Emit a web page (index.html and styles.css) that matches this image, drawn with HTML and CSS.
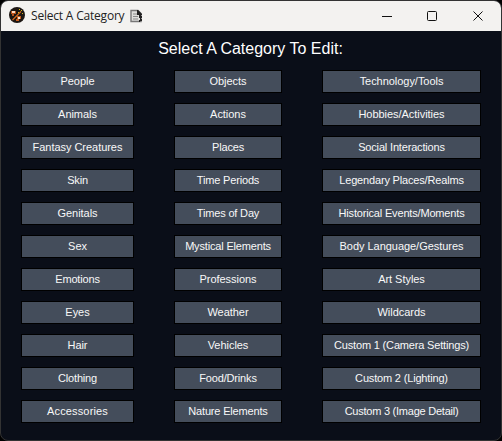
FILE: index.html
```html
<!DOCTYPE html>
<html lang="en">
<head>
<meta charset="utf-8">
<title>Select A Category</title>
<link rel="stylesheet" href="styles.css">
</head>
<body>
<div class="window">
  <header class="titlebar">
    <svg class="app-icon" width="18" height="18" viewBox="0 0 18 18">
      <circle cx="9" cy="9" r="8" fill="#1c1612"/>
      <path d="M4.500 14L13 5.500" stroke="#d96a20" stroke-width="1.100"/>
      <path d="M3 5h5v3H6v2H4V8H3z" fill="#b8521c"/>
      <path d="M4 5h3v2H4z" fill="#ffd9bd"/>
      <path d="M9 10h4v3h-2v2H8v-2h1z" fill="#c85c1c"/>
      <path d="M10 11h2v2h-2z" fill="#ffe3cc"/>
      <path d="M11 3h1v1h-1zM13 4h1v1h-1zM10 6h1v1h-1zM14 7h1v1h-1z" fill="#d8b818"/>
    </svg>
    <span class="caption">Select A Category</span>
    <svg class="doc-icon" width="13" height="14" viewBox="0 0 13 14">
      <path d="M1 1.500h7l3 3v8H1z" fill="#dededc" stroke="#777" stroke-width="1.400"/>
      <path d="M3 5h4M3 7.500h5M3 10h5" stroke="#8a8a8a"/>
      <path d="M7 1h1l4 4v1H7z" fill="#222"/>
      <path d="M9 6h2v1h1v2h-1v1h1v2h-2v1H9v-2h1V9H9z" fill="#222"/>
    </svg>
    <svg class="controls" width="104" height="12" viewBox="0 0 104 12" fill="none" stroke="#111">
      <path d="M0 6.500h10"/>
      <rect x="45.500" y="1.500" width="9" height="9" rx="1"/>
      <path d="M91.500 1.500l9 9M100.500 1.500l-9 9"/>
    </svg>
  </header>
  <main class="content">
    <h1 class="heading">Select A Category To Edit:</h1>
    <div class="grid">
      <button>People</button><button>Objects</button><button>Technology/Tools</button>
      <button>Animals</button><button>Actions</button><button>Hobbies/Activities</button>
      <button>Fantasy Creatures</button><button class="tight">Places</button><button class="tight">Social Interactions</button>
      <button class="tight">Skin</button><button class="tight">Time Periods</button><button class="tight">Legendary Places/Realms</button>
      <button>Genitals</button><button class="tight">Times of Day</button><button class="tight">Historical Events/Moments</button>
      <button>Sex</button><button class="tight">Mystical Elements</button><button>Body Language/Gestures</button>
      <button class="tight">Emotions</button><button>Professions</button><button>Art Styles</button>
      <button>Eyes</button><button>Weather</button><button>Wildcards</button>
      <button>Hair</button><button>Vehicles</button><button class="tight">Custom 1 (Camera Settings)</button>
      <button class="tight">Clothing</button><button class="tight">Food/Drinks</button><button class="tight">Custom 2 (Lighting)</button>
      <button class="loose">Accessories</button><button class="tight">Nature Elements</button><button class="tighter">Custom 3 (Image Detail)</button>
    </div>
  </main>
</div>
</body>
</html>
```
FILE: styles.css
```css
* { box-sizing: border-box; }
body { margin: 0; background: #000; overflow: hidden; }
.window {
  width: 502px;
  height: 441px;
  border: 1px solid #333;
  border-radius: 8px;
  overflow: hidden;
  background: #0a0e18;
}
.titlebar {
  height: 30px;
  padding: 0 15px 0 7px;
  display: flex;
  align-items: center;
  background: #f3f2f0;
}
.app-icon { margin-top: -2px; }
.caption {
  margin-left: 5px;
  font: 12px/16px "Open Sans", sans-serif;
  letter-spacing: -0.2px;
  color: #222;
  white-space: nowrap;
}
.doc-icon { margin-left: 6px; }
.controls { margin-left: auto; }
.heading {
  margin: 0;
  padding: 9px 1px 0 0;
  height: 39px;
  font: 16px/18px "Liberation Sans", Arial, sans-serif;
  text-align: center;
  color: #fff;
}
.grid {
  margin-left: 20px;
  display: grid;
  grid-template-columns: 113px 108px 159px;
  grid-auto-rows: 23px;
  row-gap: 10px;
  column-gap: 40px;
}
.grid button {
  padding: 0;
  border: 1px solid #000;
  border-radius: 0;
  background: #444d5b;
  color: #f8f8f8;
  font: 11px/13px "Liberation Sans", Arial, sans-serif;
  letter-spacing: -0.04px;
  white-space: nowrap;
}
.grid .tight { letter-spacing: -0.17px; }
.grid .tighter { letter-spacing: -0.24px; }
.grid .loose { letter-spacing: 0.15px; }
```
